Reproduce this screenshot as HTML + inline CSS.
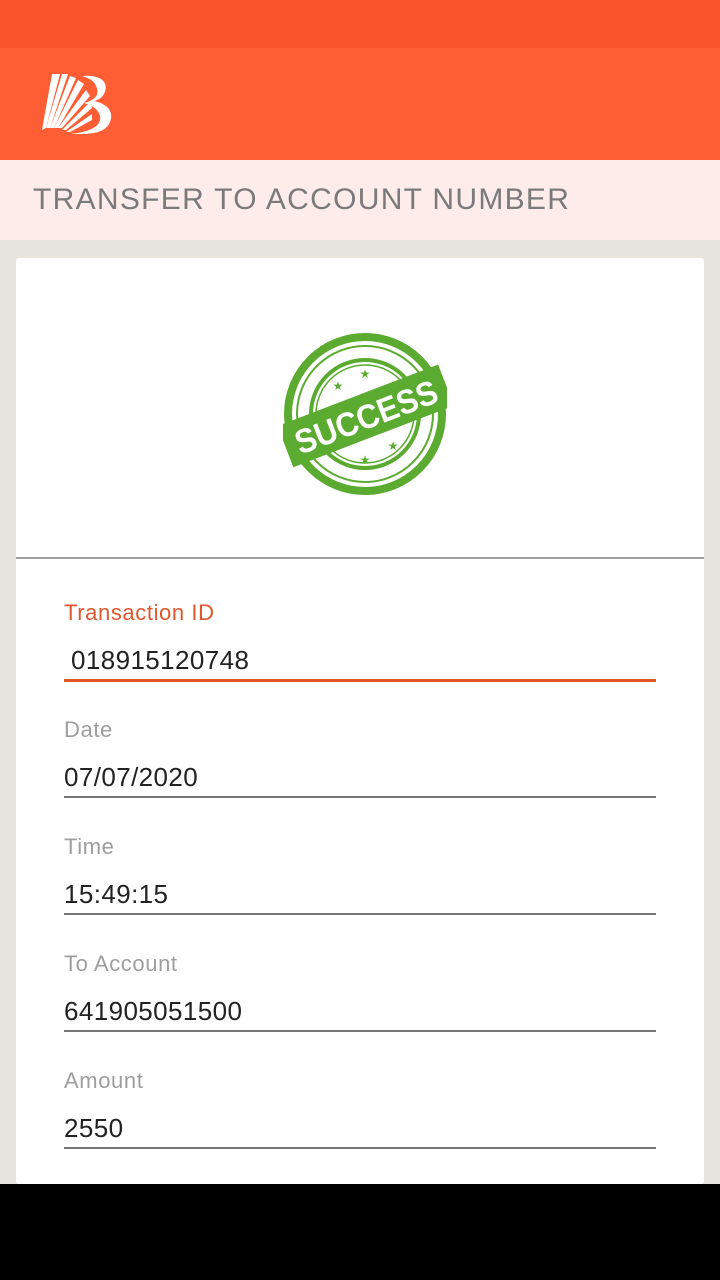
<!DOCTYPE html>
<html><head><meta charset="utf-8"><style>
body{margin:0;width:720px;height:1280px;overflow:hidden;background:#e8e5e0;font-family:"Liberation Sans",sans-serif;position:relative}
.abs{position:absolute}
.lbl{position:absolute;left:64px;font-size:22px;color:#9e9e9e;letter-spacing:0.6px}
.val{position:absolute;left:64px;font-size:26px;color:#222;letter-spacing:0.4px}
.ln{position:absolute;left:64px;width:592px;height:2px;background:#757575}
</style></head><body>
<div class="abs" style="left:0;top:0;width:720px;height:48px;background:#f9552c"></div>
<div class="abs" style="left:0;top:48px;width:720px;height:112px;background:#ff5e35"></div>
<svg class="abs" style="left:40px;top:70px" width="74" height="66" viewBox="0 0 74 66">
<g fill="#fff">
<path d="M12 4 L20 4 L6 58 L2 60 Z"/>
<path d="M22 4 L28 4 L10 58 L6 58 Z" />
<path d="M30 6 L36 8 L14 58 L10 58 Z"/>
<path d="M38 10 L44 14 L18 58 L14 58 Z"/>
<path d="M46 20 L50 26 L22 58 L18 58 Z"/>
<path d="M50 32 L52 38 L26 60 L22 60 Z"/>
<path d="M52 44 L52 50 L30 62 L26 62 Z"/>
<path d="M42 6 C60 4 70 12 64 24 C62 28 58 30 54 31 C68 34 74 42 70 52 C66 62 54 64 40 64 L30 64 C50 62 62 56 60 46 C58 38 50 35 44 33 C56 30 60 24 56 16 C54 10 48 8 42 6 Z"/>
</g></svg>
<div class="abs" style="left:0;top:160px;width:720px;height:80px;background:#fdecea"></div>
<div class="abs" style="left:33px;top:183px;font-size:30px;color:#7a7a7a;letter-spacing:1.3px">TRANSFER TO ACCOUNT NUMBER</div>
<div class="abs" style="left:16px;top:258px;width:688px;height:926px;background:#fff;border-radius:3px"></div>
<svg class="abs" style="left:283px;top:332px" width="164" height="164" viewBox="0 0 164 164">
<circle cx="82" cy="82" r="77" fill="none" stroke="#5aab2f" stroke-width="8"/>
<circle cx="82" cy="82" r="68" fill="none" stroke="#5aab2f" stroke-width="2"/>
<circle cx="82" cy="82" r="54" fill="none" stroke="#5aab2f" stroke-width="4"/>
<circle cx="82" cy="82" r="49" fill="none" stroke="#5aab2f" stroke-width="1.5"/>
<g transform="rotate(-21 82 82)">
<rect x="-4" y="62" width="172" height="44" fill="#5aab2f"/>
<text x="82" y="97" text-anchor="middle" font-family="Liberation Sans" font-weight="bold" font-size="34" fill="#fff" textLength="150" lengthAdjust="spacingAndGlyphs">SUCCESS</text>
</g>
<g fill="#5aab2f" font-size="12" font-family="DejaVu Sans" text-anchor="middle">
<text x="55" y="58">★</text><text x="82" y="46">★</text><text x="82" y="132">★</text><text x="110" y="118">★</text>
</g></svg>
<div class="abs" style="left:16px;top:557px;width:688px;height:2px;background:#9e9e9e"></div>
<div class="lbl" style="top:600px;color:#e0572e">Transaction ID</div>
<div class="val" style="top:645px;left:71px">018915120748</div>
<div class="ln" style="top:679px;height:3px;background:#e0572e"></div>
<div class="lbl" style="top:717px">Date</div>
<div class="val" style="top:762px">07/07/2020</div>
<div class="ln" style="top:796px"></div>
<div class="lbl" style="top:834px">Time</div>
<div class="val" style="top:879px">15:49:15</div>
<div class="ln" style="top:913px"></div>
<div class="lbl" style="top:951px">To Account</div>
<div class="val" style="top:996px">641905051500</div>
<div class="ln" style="top:1030px"></div>
<div class="lbl" style="top:1068px">Amount</div>
<div class="val" style="top:1113px">2550</div>
<div class="ln" style="top:1147px"></div>
<div class="abs" style="left:0;top:1184px;width:720px;height:96px;background:#000"></div>
</body></html>
